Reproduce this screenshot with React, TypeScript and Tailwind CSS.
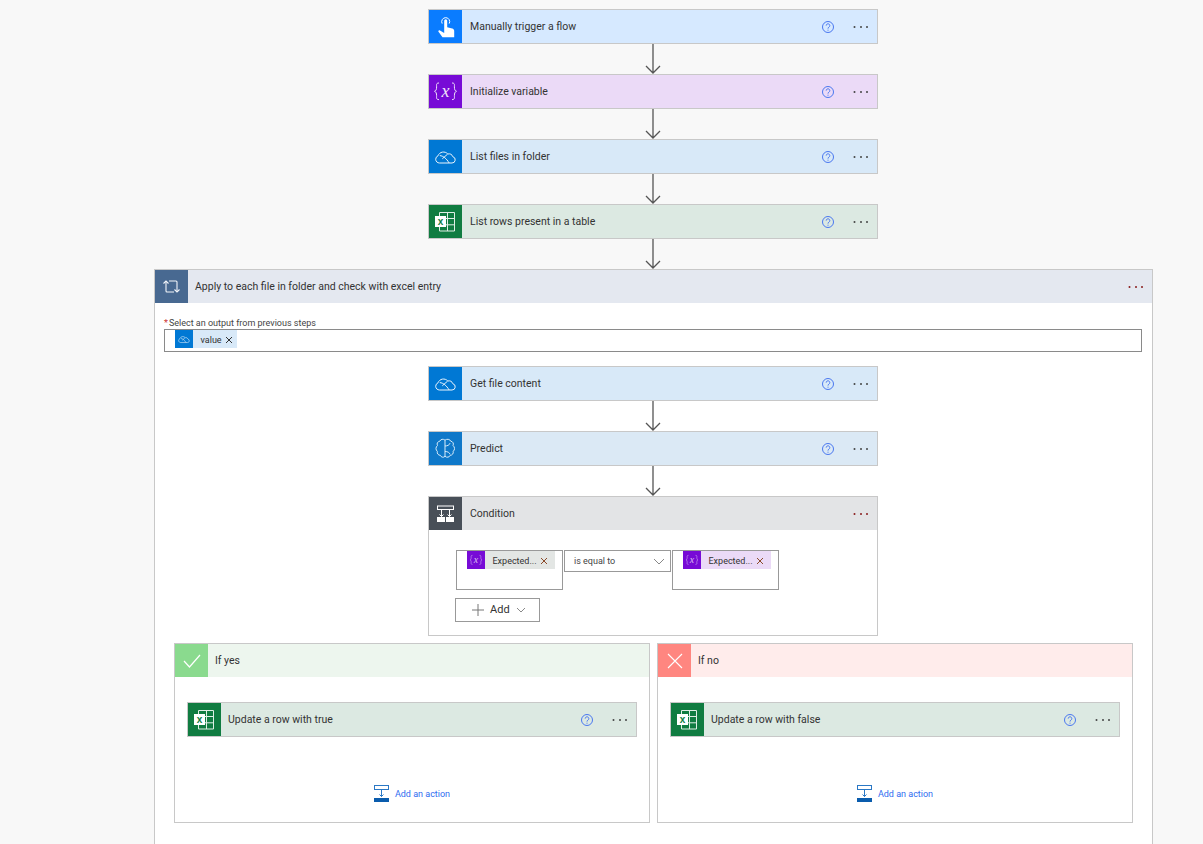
import React from 'react'

const FONT = "font-['Roboto',sans-serif]"

function HandIcon() {
  return (
    <svg width="33" height="33" viewBox="0 0 33 33" fill="none">
      <path d="M13.200 13.600a4 4 0 1 1 7 0" stroke="#fff" strokeWidth="1" />
      <path d="M15.200 10.800a1.500 1.500 0 0 1 3 0v6.400l5 1.200c1.200.3 2 1.200 2 2.500v6.300H13.500l-4-5.400c-.6-.9.5-2 1.500-1.300l4.200 2.600z" fill="#fff" />
    </svg>
  )
}

function VarIcon({ small }: { small?: boolean }) {
  const size = small ? 18 : 33
  const tint = small ? '#d9bdf0' : '#f0e4fa'
  return (
    <svg width={size} height={size} viewBox="0 0 33 33" fill="none">
      <path d="M10 8c-3 0-2.400 1.800-2.400 4 0 2.400-.6 3.900-2.100 4.300 1.500.5 2.100 2 2.100 4.300 0 2.300-.6 4 2.400 4M23 8c3 0 2.400 1.800 2.400 4 0 2.400.6 3.900 2.100 4.300-1.500.5-2.100 2-2.100 4.300 0 2.300.6 4-2.400 4" stroke={tint} strokeWidth="1" />
      <text x="16.500" y="21.500" textAnchor="middle" fontSize="18" fontStyle="italic" fontFamily="'Liberation Serif', serif" fill={tint}>x</text>
    </svg>
  )
}

function CloudIcon({ small }: { small?: boolean }) {
  const size = small ? 18 : 33
  return (
    <svg width={size} height={size} viewBox="0 0 33 33" fill="none" stroke="#eaf4fc" strokeWidth="1">
      <path d="M10.500 23h12.500a3.200 3.200 0 0 0 .8-6.300 4.300 4.300 0 0 0-5-2.700 5.800 5.800 0 0 0-9.800 1.800 3.800 3.800 0 0 0-2.300 3.500c0 2.200 1.800 3.700 3.800 3.700z" />
      <path d="M10.800 15.600c3.500.3 6.500 2.800 9.400 7.400M13.300 18.800l5.200-4.600" />
    </svg>
  )
}

function ExcelIcon() {
  return (
    <svg width="33" height="33" viewBox="0 0 33 33" fill="none">
      <path d="M10.500 7.500h15v18.500h-15z" stroke="#dfeee5" strokeWidth="1" />
      <path d="M18.500 7.500v18.500M10.500 13.500h15M10.500 19.800h15" stroke="#dfeee5" strokeWidth="1" />
      <rect x="6" y="11" width="11" height="11" fill="#fff" />
      <text x="11.500" y="20" textAnchor="middle" fontSize="10" fontWeight="700" fontFamily="'Liberation Sans', sans-serif" fill="#107c41">x</text>
    </svg>
  )
}

function BrainIcon() {
  return (
    <svg width="33" height="33" viewBox="0 0 33 33" fill="none" stroke="#d8ecfa" strokeWidth="1">
      <path d="M16 8.200c-1.500-1.500-4.500-1.200-5.200 1-2.300.3-3.300 2.500-2.300 4.300-2 1.500-2 4.500-.2 5.800-.5 2.200 1 4 3 4 .6 2 3.300 2.600 4.700 1z" />
      <path d="M16 8.200c1.700-1.500 5-1.200 5.700 1 2.300.3 3.300 2.500 2.300 4.300 2 1.500 2 4.500.2 5.800.5 2.200-1 4-3 4-.6 2-3.500 2.600-5.200 1" />
      <path d="M16 14c2.400 0 4.500-1 5-2.800M16 19.500c2.600 0 4.500 1 5 2.800" />
    </svg>
  )
}

function ConditionIcon() {
  return (
    <svg width="33" height="33" viewBox="0 0 33 33" fill="none">
      <rect x="8.500" y="9" width="16" height="3.500" stroke="#fff" strokeWidth="1" />
      <path d="M12.500 12.500v7M20.500 12.500v7M10.500 17.500l2 2 2-2M18.500 17.500l2 2 2-2" stroke="#fff" strokeWidth="1" />
      <rect x="8" y="20" width="8" height="5" fill="#fff" />
      <rect x="17" y="20" width="8" height="5" fill="#fff" />
    </svg>
  )
}

function LoopIcon() {
  return (
    <svg width="33" height="33" viewBox="0 0 33 33" fill="none" stroke="#f2f5f9" strokeWidth="1.100">
      <path d="M11 11v10a1 1 0 0 0 1 1h7" />
      <path d="M14 11h7a1 1 0 0 1 1 1v10" />
      <path d="M8.500 13.500l2.500-2.500 2.500 2.500M19.500 19.500l2.500 2.500 2.500-2.500" />
    </svg>
  )
}

function HelpIcon() {
  return (
    <svg width="14" height="14" viewBox="0 0 14 14" fill="none" stroke="#4a78f0" strokeWidth="1">
      <circle cx="7" cy="7" r="5.500" />
      <path d="M5.200 5.600a1.800 1.800 0 1 1 2.800 1.500c-.7.4-1 .8-1 1.500" />
      <path d="M7 9.700v1" />
    </svg>
  )
}

function Dots({ color = '#444' }: { color?: string }) {
  return (
    <svg width="15" height="4" viewBox="0 0 15 4" fill={color}>
      <circle cx="1.500" cy="2" r="1" />
      <circle cx="8" cy="2" r="1" />
      <circle cx="14" cy="2" r="1" />
    </svg>
  )
}

function Arrow() {
  return (
    <div className="mr-px flex h-[30px] justify-center">
      <svg width="16" height="30" viewBox="0 0 16 30" fill="none" stroke="#555" strokeWidth="1.300">
        <path d="M8 0v29M1 22l7 7 7-7" />
      </svg>
    </div>
  )
}

function StepHeader({
  icon,
  title,
  iconBg,
  bg,
  help = true,
  dots,
  titleGap = 'ml-2',
}: {
  icon: React.ReactNode
  title: string
  iconBg: string
  bg: string
  help?: boolean
  dots?: string
  titleGap?: string
}) {
  return (
    <div className={`flex h-[33px] items-center ${bg}`}>
      <div className={`flex h-[33px] w-[33px] shrink-0 items-center justify-center ${iconBg}`}>{icon}</div>
      <div className={`${titleGap} flex-1 pt-px text-[10.500px] text-[#333]`}>{title}</div>
      {help && <HelpIcon />}
      <div className="ml-[18px] mr-[9px] flex items-center">
        <Dots color={dots} />
      </div>
    </div>
  )
}

function Step(props: React.ComponentProps<typeof StepHeader>) {
  return (
    <div className="mr-px w-[450px] border border-[#c8c8c8]">
      <StepHeader {...props} />
    </div>
  )
}

function Token({
  icon,
  label,
  iconBg,
  bg,
  x,
  width,
  xGap = 'mr-[4px]',
}: {
  icon: React.ReactNode
  label: string
  iconBg: string
  bg: string
  x: string
  width: string
  xGap?: string
}) {
  return (
    <div className={`flex h-[18px] items-center ${width} ${bg}`}>
      <div className={`flex h-[18px] w-[18px] shrink-0 items-center justify-center ${iconBg}`}>{icon}</div>
      <span className="ml-[7.500px] flex-1 pt-[3px] text-[9px] text-[#333]">{label}</span>
      <svg className={`${xGap} mt-px`} width="8" height="8" viewBox="0 0 8 8" stroke={x} strokeWidth="1">
        <path d="M1 1l6 6M7 1l-6 6" />
      </svg>
    </div>
  )
}

function AddAction() {
  return (
    <div className="flex items-center gap-[5px]">
      <svg width="16" height="18" viewBox="0 0 16 18" fill="none">
        <rect x="0.500" y="0.500" width="14" height="4" stroke="#2b78c5" />
        <path d="M7.500 4.500v7M5.500 9.500l2 2 2-2" stroke="#2b78c5" />
        <rect x="0" y="13" width="15" height="4" fill="#0a5cad" />
      </svg>
      <span className="pt-[2px] text-[9px] text-[#2f6cf0]">Add an action</span>
    </div>
  )
}

function Branch({
  icon,
  title,
  iconBg,
  bg,
  step,
}: {
  icon: React.ReactNode
  title: string
  iconBg: string
  bg: string
  step: string
}) {
  return (
    <div className="flex h-[180px] w-[476px] flex-col border border-[#c8c8c8] bg-white">
      <div className={`flex h-[33px] items-center ${bg}`}>
        <div className={`flex h-[33px] w-[33px] items-center justify-center ${iconBg}`}>{icon}</div>
        <span className="ml-[7px] pt-px text-[10.500px] text-[#333]">{title}</span>
      </div>
      <div className="ml-[12px] mt-[25px]">
        <Step icon={<ExcelIcon />} title={step} iconBg="bg-[#107c41]" bg="bg-[#dce9e2]" titleGap="ml-[7px]" />
      </div>
      <div className="mt-[48px] flex justify-center">
        <AddAction />
      </div>
    </div>
  )
}

export default function App() {
  return (
    <div className={`${FONT} h-[844px] w-[1203px] overflow-hidden bg-[#f8f8f8]`}>
      <div className="flex flex-col items-center pl-[104px] pt-[9px]">
        <Step icon={<HandIcon />} title="Manually trigger a flow" iconBg="bg-[#0a7cff]" bg="bg-[#d6e9ff]" />
        <Arrow />
        <Step icon={<VarIcon />} title="Initialize variable" iconBg="bg-[#770bd6]" bg="bg-[#ebdaf7]" />
        <Arrow />
        <Step icon={<CloudIcon />} title="List files in folder" iconBg="bg-[#0078d4]" bg="bg-[#d8e9f8]" />
        <Arrow />
        <Step icon={<ExcelIcon />} title="List rows present in a table" iconBg="bg-[#107c41]" bg="bg-[#dce9e2]" />
        <Arrow />
        <div className="w-[999px] border border-[#c8c8c8] bg-white">
          <StepHeader icon={<LoopIcon />} title="Apply to each file in folder and check with excel entry" iconBg="bg-[#486991]" bg="bg-[#e4e8f0]" help={false} dots="#8a1c1c" titleGap="ml-[7px]" />
          <div className="px-[9px] pt-[14px]">
            <div className="h-[12px] text-[9px] leading-[12px] text-[#444]">
              <span className="mr-px text-[#c33]">*</span>Select an output from previous steps
            </div>
            <div className="flex h-[23px] w-[978px] items-start border border-[#8a8a8a] pl-[10px]">
              <Token icon={<CloudIcon small />} label="value" iconBg="bg-[#0078d4]" bg="bg-[#d8e9f8]" x="#333" width="w-[62px]" />
            </div>
          </div>
          <div className="flex flex-col items-center pt-[14px]">
            <Step icon={<CloudIcon />} title="Get file content" iconBg="bg-[#0078d4]" bg="bg-[#d8e9f8]" />
            <Arrow />
            <Step icon={<BrainIcon />} title="Predict" iconBg="bg-[#0f78c9]" bg="bg-[#dbe9f5]" />
            <Arrow />
            <div className="mr-px h-[140px] w-[450px] border border-[#c8c8c8]">
              <StepHeader icon={<ConditionIcon />} title="Condition" iconBg="bg-[#484f58]" bg="bg-[#e3e4e6]" help={false} dots="#8a1c1c" />
              <div className="flex items-start gap-px pl-[27px] pt-[20px]">
                <div className="h-[40px] w-[107px] border border-[#999] pl-[10px]">
                  <Token icon={<VarIcon small />} label="Expected..." iconBg="bg-[#770bd6]" bg="bg-[#e3e6e4]" x="#8a4a2a" width="w-[88px]" xGap="mr-[7px]" />
                </div>
                <div className="flex h-[22px] w-[107px] items-center justify-between border border-[#999] pl-[9px] pr-[5px] text-[9px] text-[#444]">
                  <span className="pt-[2px]">is equal to</span>
                  <svg width="12" height="7" viewBox="0 0 12 7" fill="none" stroke="#888">
                    <path d="M1 1l5 5 5-5" />
                  </svg>
                </div>
                <div className="h-[40px] w-[107px] border border-[#999] pl-[10px]">
                  <Token icon={<VarIcon small />} label="Expected..." iconBg="bg-[#770bd6]" bg="bg-[#ebdaf7]" x="#8a4a2a" width="w-[88px]" xGap="mr-[7px]" />
                </div>
              </div>
              <div className="ml-[26px] mt-[8px] flex h-[24px] w-[85px] items-center border border-[#999] pl-[15px] text-[11px] text-[#333]">
                <svg width="14" height="14" viewBox="0 0 14 14" fill="none" stroke="#777">
                  <path d="M7 1v12M1 7h12" />
                </svg>
                <span className="ml-[5px] pt-px">Add</span>
                <svg className="ml-[6px]" width="10" height="6" viewBox="0 0 10 6" fill="none" stroke="#888">
                  <path d="M1 1l4 4 4-4" />
                </svg>
              </div>
            </div>
          </div>
          <div className="ml-[19px] mt-[7px] flex gap-[7px]">
            <Branch
              icon={
                <svg width="20" height="16" viewBox="0 0 20 16" fill="none" stroke="#fff" strokeWidth="1.200">
                  <path d="M2 8l5.500 6L18 2" />
                </svg>
              }
              title="If yes"
              iconBg="bg-[#8ada8e]"
              bg="bg-[#edf6ee]"
              step="Update a row with true"
            />
            <Branch
              icon={
                <svg width="16" height="16" viewBox="0 0 16 16" fill="none" stroke="#fff" strokeWidth="1.100">
                  <path d="M1 1l14 14M15 1L1 15" />
                </svg>
              }
              title="If no"
              iconBg="bg-[#ff8680]"
              bg="bg-[#ffeceb]"
              step="Update a row with false"
            />
          </div>
          <div className="h-[30px]" />
        </div>
      </div>
    </div>
  )
}
